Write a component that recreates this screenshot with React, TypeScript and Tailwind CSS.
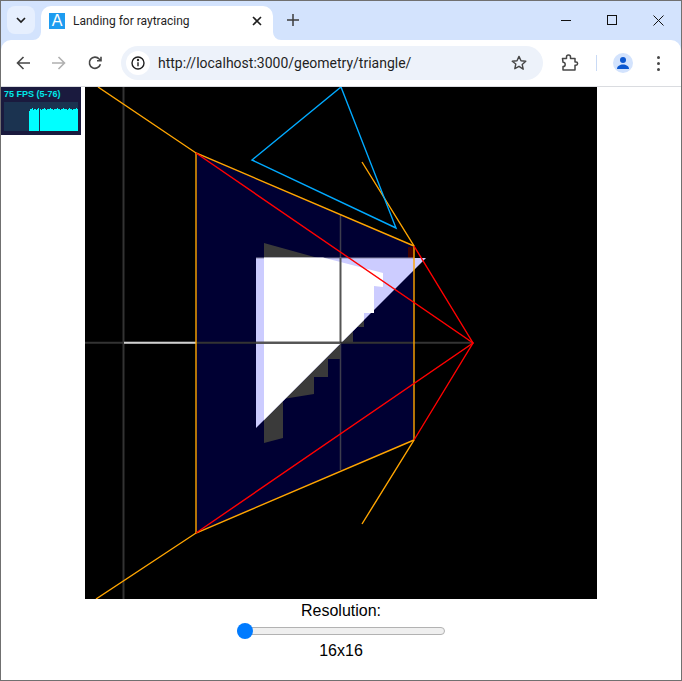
import React from "react";

const graphTops = [10,8,8,7,9,8,8,9,8,7,8,8,9,8,8,7,8,9,8,8,8,7,8,8,9,8,8,8,7,8,8,9,8,8,7,8,8,8,9,8,7,8,8,9,8,8,8,7,8];

function Stats() {
  return (
    <div className="absolute left-0 top-0 w-[80px] h-[48px] bg-[#1a1a3e] flex flex-col px-[3px] pt-[1px]">
      <div className="text-[9px] leading-[13px] font-bold text-[#00e8e8] font-['Liberation_Sans',sans-serif]">75 FPS (5-76)</div>
      <svg className="block mt-[1px]" width="74" height="29" viewBox="0 0 74 29">
        <rect width="74" height="29" fill="#1b3350" />
        {graphTops.map((t, i) => (
          <rect key={i} x={25 + i} y={t - 1} width="1" height={30 - t} fill="#00ffff" />
        ))}
        <rect x="35" y="7" width="1" height="22" fill="#1b3350" />
      </svg>
    </div>
  );
}

function Scene() {
  return (
    <svg className="block bg-black shrink-0" width="512" height="512" viewBox="85 87 512 512">
      <polygon points="196,153 414,246 414,440 196,533" fill="#000033" />
      <line x1="123.5" y1="87" x2="123.5" y2="599" stroke="#333333" strokeWidth="2" />
      <line x1="340.5" y1="214" x2="340.5" y2="470" stroke="#3d3d4d" strokeWidth="1.5" />
      <rect x="408" y="247" width="6" height="11" fill="#400000" />
      <polygon points="264,243 318,258 264,258" fill="#3a3a3a" />
      <polygon points="364,320 364,327 353,327 353,343 340,343 340,359 328,359 328,377 314,377 314,394 283,399 283,438 264,443 264,420" fill="#3a3a3a" />
      <polygon points="256,258 426,258 256,428" fill="#ccccff" />
      <line x1="256" y1="258" x2="414" y2="258" stroke="#8a8aa8" strokeWidth="1" />
      <polygon points="264,257.5 323,257.5 383,273 383,287 374,286 374,313 364,313 364,320 264,420" fill="#ffffff" />
      <line x1="340.5" y1="258" x2="340.5" y2="343" stroke="#555555" strokeWidth="2" />
      <line x1="85" y1="342.7" x2="473" y2="342.7" stroke="#333333" strokeWidth="2" />
      <line x1="256" y1="342.7" x2="340" y2="342.7" stroke="#555555" strokeWidth="2" />
      <line x1="124" y1="342.7" x2="196" y2="342.7" stroke="#d0d0d0" strokeWidth="2" />
      <g fill="none" stroke="#ffa500" strokeWidth="1.4">
        <polyline points="98,87 196,153 414,246" />
        <polyline points="362,162 414,246 414,440 362,524" />
        <polyline points="414,440 196,533 96,599" />
        <line x1="196" y1="153" x2="196" y2="533" />
      </g>
      <g fill="none" stroke="#ff0000" strokeWidth="1.4">
        <polyline points="196,153 473,343 196,533" />
        <polyline points="414,246 473,343 414,440" />
      </g>
      <polygon points="341,87 252,160 396,228" fill="none" stroke="#00aaff" strokeWidth="1.4" />
    </svg>
  );
}

function TabStrip() {
  return (
    <div className="h-[39px] flex items-end shrink-0">
      <div className="ml-[6px] mb-[6px] w-[28px] h-[28px] rounded-[8px] bg-[#e6effe] flex items-center justify-center">
        <svg width="12" height="12" viewBox="0 0 12 12" fill="none" stroke="#1f1f1f" strokeWidth="1.7"><path d="M2 4l4 4 4-4" /></svg>
      </div>
      <div className="relative ml-[6px] w-[232px] h-[34px] bg-white rounded-t-[10px] flex items-center pl-[8px] pr-[8px] pb-[4px]">
        <svg className="absolute left-[-8px] bottom-0" width="8" height="8" viewBox="0 0 8 8"><path d="M8 0v8H0a8 8 0 0 0 8-8z" fill="#ffffff" /></svg>
        <svg className="absolute right-[-8px] bottom-0" width="8" height="8" viewBox="0 0 8 8"><path d="M0 0v8h8a8 8 0 0 1-8-8z" fill="#ffffff" /></svg>
        <div className="w-[16px] h-[16px] bg-[#1e9cf0] text-white text-[16px] leading-[16px] text-center font-['Liberation_Sans',sans-serif] shrink-0">A</div>
        <div className="ml-[8px] flex-1 text-[12px] text-[#1f1f1f] font-['Roboto',sans-serif] whitespace-nowrap">Landing for raytracing</div>
        <svg width="10" height="10" viewBox="0 0 10 10" stroke="#1f1f1f" strokeWidth="1.6" fill="none" className="mr-[3px]"><path d="M1 1l8 8M9 1l-8 8" /></svg>
      </div>
      <div className="ml-[14px] mb-[14px] w-[12px] h-[12px]">
        <svg width="12" height="12" viewBox="0 0 12 12" stroke="#3c3c3c" strokeWidth="1.5" fill="none"><path d="M6 0v12M0 6h12" /></svg>
      </div>
      <div className="ml-auto flex items-center mb-[14px] mr-[17px] gap-[36px]">
        <svg width="10" height="12" viewBox="0 0 10 12" stroke="#111" strokeWidth="1" fill="none"><path d="M0 6.5h10" /></svg>
        <svg width="10" height="10" viewBox="0 0 10 10" stroke="#111" strokeWidth="1" fill="none"><rect x="0.5" y="0.5" width="9" height="9" /></svg>
        <svg width="11" height="11" viewBox="0 0 11 11" stroke="#111" strokeWidth="1" fill="none"><path d="M.5.5l10 10M10.5.5l-10 10" /></svg>
      </div>
    </div>
  );
}

function Toolbar() {
  return (
    <div className="h-[47px] bg-white rounded-t-[10px] border-b border-[#dadce0] flex items-center shrink-0">
      <div className="w-[36px] ml-[4px] flex justify-center">
        <svg width="14" height="14" viewBox="0 0 14 14" stroke="#474747" strokeWidth="1.6" fill="none"><path d="M14 7H1.5M7.5 1L1.5 7l6 6" /></svg>
      </div>
      <div className="w-[36px] flex justify-center">
        <svg width="14" height="14" viewBox="0 0 14 14" stroke="#b0b0b0" strokeWidth="1.6" fill="none"><path d="M0 7h12.5M6.5 1l6 6-6 6" /></svg>
      </div>
      <div className="w-[36px] flex justify-center">
        <svg width="14" height="14" viewBox="0 0 14 14" stroke="#474747" strokeWidth="1.6" fill="none"><path d="M12.4 8.2A5.6 5.6 0 1 1 11.2 3L13 4.8M13 .8v4H9" /></svg>
      </div>
      <div className="ml-[8px] w-[422px] h-[34px] rounded-full bg-[#edf2fa] flex items-center">
        <div className="ml-[5px] w-[24px] h-[24px] rounded-full bg-white flex items-center justify-center shrink-0">
          <svg width="14" height="14" viewBox="0 0 14 14" fill="none" stroke="#1f1f1f" strokeWidth="1.4">
            <circle cx="7" cy="7" r="6" />
            <path d="M7 6.2v4" />
            <circle cx="7" cy="4" r="0.5" fill="#1f1f1f" />
          </svg>
        </div>
        <div className="ml-[8px] flex-1 text-[14px] text-[#1f1f1f] font-['Roboto',sans-serif] whitespace-nowrap">http://localhost:3000/geometry/triangle/</div>
        <svg className="mr-[16px]" width="16" height="16" viewBox="0 0 16 16" fill="none" stroke="#474747" strokeWidth="1.4" strokeLinejoin="round">
          <path d="M8 1.4l2 4.4 4.8.5-3.6 3.2 1 4.7L8 11.3l-4.2 2.4 1-4.7L1.2 6.3 6 5.8z" />
        </svg>
      </div>
      <div className="ml-[18px] w-[18px] h-[18px] shrink-0">
        <svg width="18" height="18" viewBox="0 0 18 18" fill="none" stroke="#474747" strokeWidth="1.5" strokeLinejoin="round">
          <path d="M1.5 4.5h4V3a2 2 0 0 1 4 0v1.5h4.5V8h1a1.6 1.6 0 0 1 0 3.2h-1V16H2v-3.4a2.2 2.2 0 0 0 0-4.4z" />
        </svg>
      </div>
      <div className="ml-[17px] w-[1px] h-[16px] bg-[#c9daf5]" />
      <div className="ml-[16px] w-[20px] h-[20px] rounded-full bg-[#d3e3fd] flex items-center justify-center">
        <svg width="14" height="14" viewBox="0 0 14 14" fill="#0b57d0"><circle cx="7" cy="4" r="3" /><path d="M1 13c0-3 3-4.5 6-4.5S13 10 13 13z" /></svg>
      </div>
      <div className="ml-[24px] flex flex-col gap-[3px]">
        <div className="w-[3px] h-[3px] rounded-full bg-[#474747]" />
        <div className="w-[3px] h-[3px] rounded-full bg-[#474747]" />
        <div className="w-[3px] h-[3px] rounded-full bg-[#474747]" />
      </div>
    </div>
  );
}

export default function App() {
  return (
    <div className="w-[682px] h-[681px] border border-[#707070] bg-[#d3e3fd] flex flex-col overflow-hidden font-['Liberation_Sans',sans-serif]">
      <TabStrip />
      <Toolbar />
      <div className="relative flex-1 bg-white flex flex-col items-center text-[16px] text-black">
        <Stats />
        <Scene />
        <div className="mt-[3px] leading-[18px]">Resolution:</div>
        <input
          type="range"
          min={16}
          max={512}
          defaultValue={16}
          className="block mt-[3px] w-[208px] h-[16px] appearance-none bg-transparent [&::-webkit-slider-runnable-track]:h-[8px] [&::-webkit-slider-runnable-track]:rounded-full [&::-webkit-slider-runnable-track]:bg-[#efefef] [&::-webkit-slider-runnable-track]:border [&::-webkit-slider-runnable-track]:border-[#b2b2b2] [&::-webkit-slider-thumb]:appearance-none [&::-webkit-slider-thumb]:w-[16px] [&::-webkit-slider-thumb]:h-[16px] [&::-webkit-slider-thumb]:rounded-full [&::-webkit-slider-thumb]:bg-[#007bff] [&::-webkit-slider-thumb]:mt-[-5px] [&::-webkit-slider-thumb]:ml-[-1px]"
        />
        <div className="mt-[3px] leading-[18px]">16x16</div>
      </div>
    </div>
  );
}
